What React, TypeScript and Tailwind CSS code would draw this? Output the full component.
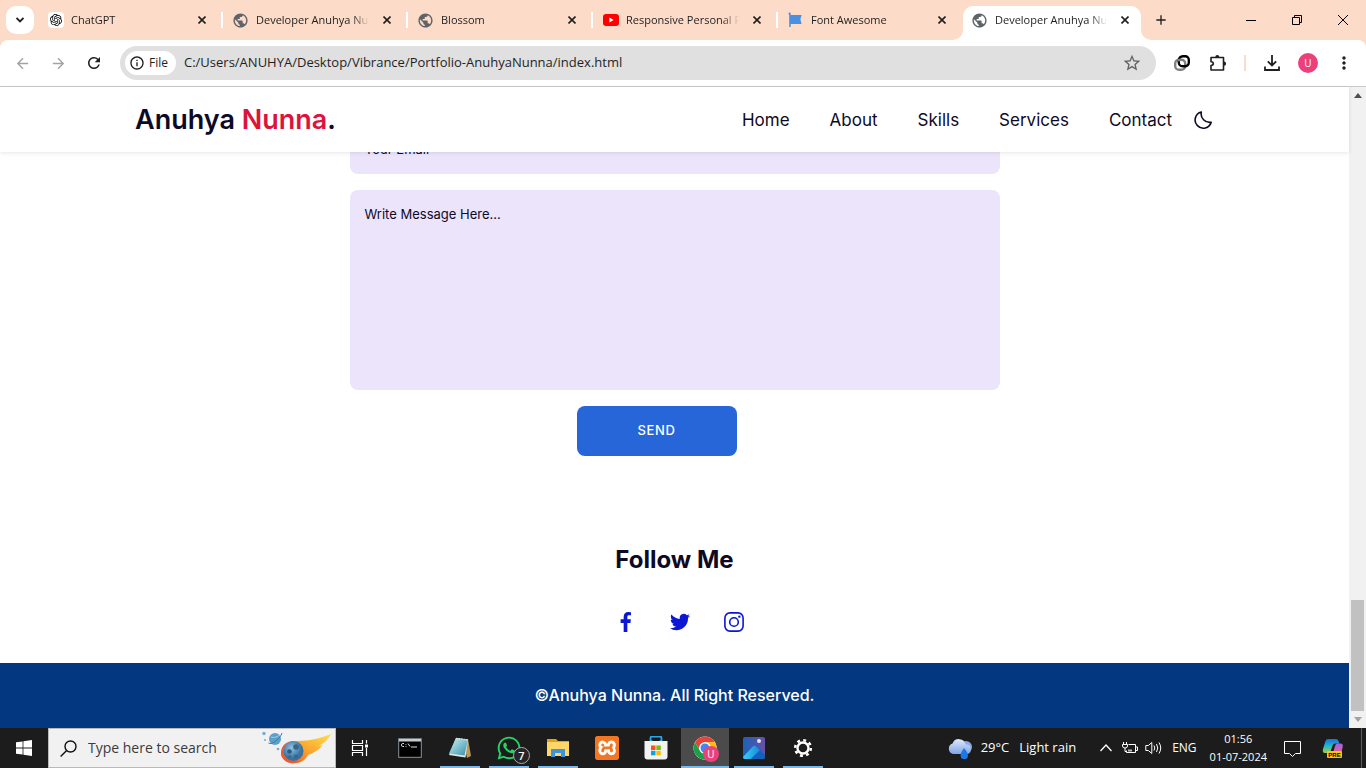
import React from "react";
import { SiOpenai, SiXampp } from "react-icons/si";
import { FaWhatsapp } from "react-icons/fa";
import {
  MdPublic,
  MdRefresh,
  MdStarBorder,
  MdArrowBack,
  MdArrowForward,
  MdInfoOutline,
  MdMoreVert,
  MdAdd,
} from "react-icons/md";

const SYSTEM_FONT = "font-['Open_Sans','Noto_Sans',sans-serif]";
const SITE_FONT = "font-['Inter','Open_Sans',sans-serif]";

/* ---------- Browser ---------- */

const Globe = () => <MdPublic className="size-[17px] text-[#5f6368]" />;

const ChatIcon = () => (
  <span className="flex size-4 items-center justify-center rounded-sm bg-white">
    <SiOpenai className="size-3 text-black" />
  </span>
);

const YouTubeIcon = () => (
  <svg viewBox="0 0 16 16" className="size-4">
    <rect y="2" width="16" height="12" rx="3" fill="#f00" />
    <path d="M6.4 5.6v4.8L10.6 8z" fill="#fff" />
  </svg>
);

const FlagIcon = () => (
  <svg viewBox="0 0 16 16" className="size-4" fill="#4a90e2">
    <path d="M.5 1.500a1 1 0 0 1 2.200 0V15H1.200V3A1.600 1.600 0 0 1 .5 1.500z" />
    <path d="M2 3h11.600l-1.200 4.200 1.200 4.800H2z" />
  </svg>
);

const tabs = [
  { title: "ChatGPT", icon: <ChatIcon /> },
  { title: "Developer Anuhya Nunna", icon: <Globe /> },
  { title: "Blossom", icon: <Globe /> },
  { title: "Responsive Personal Portfolio", icon: <YouTubeIcon /> },
  { title: "Font Awesome", icon: <FlagIcon /> },
  { title: "Developer Anuhya Nunna", icon: <Globe />, active: true },
];

function TabStrip() {
  return (
    <div className="flex h-10 shrink-0 bg-[#fcdbc9]">
      <button aria-label="Search tabs" className="ml-1.5 mt-1.5 flex size-7 shrink-0 items-center justify-center rounded-[10px] bg-white">
        <svg viewBox="0 0 8 8" className="size-2" fill="none" stroke="#1f1f1f" strokeWidth="1.800"><path d="M.5 2L4 5.500 7.500 2" /></svg>
      </button>
      <div role="tablist" className="ml-1 flex min-w-0 flex-1">
        {tabs.map((tab, i) => (
          <div key={i} className="relative flex min-w-0 max-w-[185px] flex-1 items-end pr-[7px]">
            <div
              role="tab"
              aria-selected={!!tab.active}
              className={
                tab.active
                  ? "flex h-[34px] w-full items-center rounded-t-[10px] bg-white pb-1.5 pl-2 pr-2"
                  : "flex h-[34px] w-full items-center pb-1.5 pl-[9px] pr-1.5"
              }
            >
              <span className="flex w-[17px] shrink-0 justify-center">{tab.icon}</span>
              <span className="ml-[7px] min-w-0 flex-1 overflow-hidden whitespace-nowrap text-[11px] leading-4 text-[#1f1f1f] [mask-image:linear-gradient(to_right,black_85%,transparent)]">
                {tab.title}
              </span>
              <button aria-label={`Close ${tab.title}`} className="ml-2.5 flex size-4 shrink-0 items-center justify-center text-[#1f1f1f]">
                <svg viewBox="0 0 8 8" className="size-2" stroke="currentColor" strokeWidth="1.600"><path d="M.5 .5l7 7M7.500 .5l-7 7" /></svg>
              </button>
            </div>
            {i < 4 && <span className="absolute right-0 top-3 h-4 w-0.5 bg-white" />}
            {tab.active && (
              <>
                <svg viewBox="0 0 10 10" className="absolute -left-2.5 bottom-0 size-2.5" fill="#fff">
                  <path d="M10 0v10H0A10 10 0 0 0 10 0z" />
                </svg>
                <svg viewBox="0 0 10 10" className="absolute -right-[3px] bottom-0 size-2.5" fill="#fff">
                  <path d="M0 0v10h10A10 10 0 0 1 0 0z" />
                </svg>
              </>
            )}
          </div>
        ))}
        <button aria-label="New tab" className="ml-[3px] mt-2.5 flex size-5 items-center justify-center text-[#1f1f1f]">
          <MdAdd className="size-4" />
        </button>
      </div>
      <div className="flex h-10 shrink-0 items-center text-black">
        <button aria-label="Minimize" className="flex w-[46px] justify-center">
          <svg viewBox="0 0 10 10" className="size-2.5" stroke="currentColor"><path d="M0 5.500h10" /></svg>
        </button>
        <button aria-label="Restore" className="flex w-[46px] justify-center">
          <svg viewBox="0 0 10 10" className="size-2.5" stroke="currentColor" fill="none"><path d="M.5 2.500h7v7h-7zM2.500 2.500v-2h7v7h-2" /></svg>
        </button>
        <button aria-label="Close window" className="flex w-[46px] justify-center">
          <svg viewBox="0 0 10 10" className="size-2.5" stroke="currentColor"><path d="M0 0l10 10M10 0L0 10" /></svg>
        </button>
      </div>
    </div>
  );
}

function AddressBar() {
  return (
    <div className="shrink-0 bg-[#fcdbc9]">
      <div className="flex h-[47px] items-center rounded-t-lg border-b border-[#cacaca] bg-white pl-3.5 pr-3 text-[#1f1f1f]">
        <button aria-label="Back" className="text-[#a3a3a3]"><MdArrowBack className="size-[17px]" /></button>
        <button aria-label="Forward" className="ml-[19px] text-[#a3a3a3]"><MdArrowForward className="size-[17px]" /></button>
        <button aria-label="Reload" className="ml-[18px]"><MdRefresh className="size-[18px]" /></button>
        <div className="ml-[17px] flex h-[34px] flex-1 items-center rounded-full bg-[#e0e0e0] pl-[5px] pr-3.5">
          <button className="flex h-6 items-center gap-1 rounded-full bg-white pl-1 pr-2 text-xs">
            <MdInfoOutline className="size-4" />
            File
          </button>
          <input
            aria-label="Address"
            defaultValue="C:/Users/ANUHYA/Desktop/Vibrance/Portfolio-AnuhyaNunna/index.html"
            className="ml-2 min-w-0 flex-1 bg-transparent text-[13px] outline-none"
          />
          <button aria-label="Bookmark this page"><MdStarBorder className="size-5 text-[#5f6368]" /></button>
        </div>
        <button aria-label="Linked rings extension" className="ml-[18px]">
          <svg viewBox="0 0 16 16" className="size-4" fill="none" strokeWidth="2.400">
            <rect x="1.200" y="4.700" width="10" height="10" rx="3.800" stroke="#808080" />
            <path d="M4.800 7V5.200a4 4 0 0 1 4-4h2.500a3.500 3.500 0 0 1 3.500 3.500v3a3.500 3.500 0 0 1-3.500 3.500H8.600a3.800 3.800 0 0 1-3.800-3.800z" stroke="#000" />
            <path d="M3.600 5.500Q4.500 4.700 7 4.700" stroke="#808080" />
          </svg>
        </button>
        <button aria-label="Extensions" className="ml-[19px]">
          <svg viewBox="0 0 18 18" className="size-[18px]" fill="currentColor">
            <path d="M2 3.500h12.500v12.500H2v-4.500q2.300 0 2.300-1.900T2 7.700z" fill="none" stroke="currentColor" strokeWidth="1.600" strokeLinejoin="round" />
            <path d="M6.300 3a2 2 0 0 1 4 0zM15 7.600a2.100 2.100 0 0 1 0 4.200z" />
          </svg>
        </button>
        <span className="ml-[17px] h-4 w-0.5 bg-[#fcdbc9]" />
        <button aria-label="Downloads" className="ml-[18px]">
          <svg viewBox="0 0 16 16" className="size-4" fill="none" stroke="currentColor" strokeWidth="1.800">
            <path d="M8 0v10M3.800 6.300L8 10.500l4.200-4.200M1 11.500V15h14v-3.500" />
          </svg>
        </button>
        <button aria-label="Profile" className="ml-[18px] flex size-5 items-center justify-center rounded-full bg-[#ec407a] text-[10px] text-white">U</button>
        <button aria-label="Menu" className="ml-4"><MdMoreVert className="size-5" /></button>
      </div>
    </div>
  );
}

function Scrollbar() {
  return (
    <div className="flex w-[17px] shrink-0 flex-col items-center bg-[#f1f1f1] py-[6px]">
      <svg viewBox="0 0 8 5" className="h-[5px] w-2" fill="#505050"><path d="M4 0l4 5H0z" /></svg>
      <div className="flex-1" />
      <div className="mb-[6px] h-[111px] w-[13px] bg-[#c1c1c1]" />
      <svg viewBox="0 0 8 5" className="h-[5px] w-2" fill="#a3a3a3"><path d="M4 5L0 0h8z" /></svg>
    </div>
  );
}

/* ---------- Portfolio page ---------- */

const links = ["Home", "About", "Skills", "Services", "Contact"];

function SiteHeader() {
  return (
    <header className="relative z-10 flex h-[65px] shrink-0 items-center justify-between bg-white pl-[135px] pr-[137px] text-[#0e0a26] shadow-[0_1px_4px_rgba(0,0,0,0.1)]">
      <a href="#home" className="text-[27px] font-semibold leading-9">
        Anuhya <span className="text-[#dc143c]">Nunna</span>.
      </a>
      <div className="flex items-center">
        <nav className="flex gap-10 text-[17px] leading-6">
          {links.map((l) => (
            <a key={l} href={`#${l.toLowerCase()}`}>{l}</a>
          ))}
        </nav>
        <button aria-label="Dark mode" className="ml-[22px]">
          <svg viewBox="0 0 18 18" className="size-[18px]" fill="none" stroke="currentColor" strokeWidth="1.600" strokeLinejoin="round">
            <path d="M7.300 1A8.200 8.200 0 1 0 17.200 11.200A8.600 8.600 0 0 1 7.300 1z" />
          </svg>
        </button>
      </div>
    </header>
  );
}

const field =
  "w-full shrink-0 rounded-lg bg-[#ece4fb] px-[15px] text-[13px] text-[#0e0a26] outline-none placeholder:text-[#0e0a26]";

function SitePage() {
  return (
    <div className={`${SITE_FONT} flex min-w-0 flex-1 flex-col bg-white`}>
      <SiteHeader />
      <main className="flex min-h-0 flex-1 flex-col justify-end overflow-hidden">
        <form className="mx-auto flex w-full max-w-[650px] shrink-0 flex-col gap-4" onSubmit={(e) => e.preventDefault()}>
          <input type="email" aria-label="Your Email" placeholder="Your Email" className={`${field} h-[50px]`} />
          <textarea aria-label="Message" placeholder="Write Message Here..." className={`${field} h-[200px] resize-none py-[15px]`} />
          <button className="mr-9 h-[50px] w-40 self-center rounded-lg bg-[#2666d8] text-[13px] font-medium tracking-wider text-white">SEND</button>
        </form>
        <h2 className="mt-[86px] shrink-0 text-center text-2xl font-bold leading-9 text-[#0e0a26]">Follow Me</h2>
        <div className="mt-8 mb-[29px] flex shrink-0 justify-center gap-[30px] pl-2.5 text-[#0b17d5]">
          <a href="#facebook" aria-label="Facebook">
            <svg viewBox="0 0 24 24" className="size-6" fill="currentColor">
              <path d="M15.120,5.320H17V2.140A26.110,26.110,0,0,0,14.260,2C11.540,2,9.680,3.660,9.680,6.700V9.320H6.610v3.560H9.680V22h3.680V12.880h3.060l.46-3.560H13.360V7.050C13.360,6,13.640,5.320,15.120,5.320Z" />
            </svg>
          </a>
          <a href="#twitter" aria-label="Twitter">
            <svg viewBox="0 0 24 24" className="size-6" fill="currentColor">
              <path d="M22,5.800a8.490,8.490,0,0,1-2.360.64,4.130,4.130,0,0,0,1.810-2.270,8.210,8.210,0,0,1-2.610,1,4.100,4.100,0,0,0-7,3.740A11.640,11.640,0,0,1,3.390,4.620a4.160,4.160,0,0,0-.55,2.070A4.090,4.090,0,0,0,4.660,10.100,4.050,4.050,0,0,1,2.800,9.590v.05a4.100,4.100,0,0,0,3.300,4A3.930,3.930,0,0,1,5,13.810a4.900,4.900,0,0,1-.77-.07,4.110,4.110,0,0,0,3.830,2.840A8.220,8.220,0,0,1,3,18.340a7.930,7.930,0,0,1-1-.06,11.570,11.570,0,0,0,6.290,1.850A11.590,11.590,0,0,0,20,8.450c0-.17,0-.35,0-.53A8.430,8.430,0,0,0,22,5.800Z" />
            </svg>
          </a>
          <a href="#instagram" aria-label="Instagram">
            <svg viewBox="0 0 24 24" className="size-6" fill="none" stroke="currentColor" strokeWidth="1.600">
              <rect x="2.900" y="2.900" width="18.200" height="18.200" rx="5" />
              <circle cx="12" cy="12" r="4.300" />
              <circle cx="17.340" cy="6.660" r="1.200" fill="currentColor" stroke="none" />
            </svg>
          </a>
        </div>
      </main>
      <footer className="flex h-[65px] shrink-0 items-center justify-center bg-[#033880] pb-0.5 text-base font-medium text-white">
        <p>©Anuhya Nunna. All Right Reserved.</p>
      </footer>
    </div>
  );
}

/* ---------- Taskbar ---------- */

const WindowsLogo = () => (
  <svg viewBox="0 0 16 16" className="size-4" fill="#fff">
    <path d="M0 2.300l6.600-.9v6.200H0zM7.400 1.300L16 0v7.600H7.400zM0 8.400h6.600v6.200L0 13.700zM7.400 8.400H16V16l-8.600-1.300z" />
  </svg>
);

const Comet = () => (
  <svg viewBox="0 0 72 34" className="h-[34px] w-[72px] shrink-0">
    <defs>
      <linearGradient id="tail" x1="0" x2="1" y1="1" y2="0">
        <stop offset="0" stopColor="#e8502c" /><stop offset=".5" stopColor="#fba62f" /><stop offset="1" stopColor="#fde04a" />
      </linearGradient>
      <radialGradient id="rock" cx=".4" cy=".35"><stop offset="0" stopColor="#8cc4e4" /><stop offset="1" stopColor="#38729f" /></radialGradient>
    </defs>
    <path d="M20 22c1-8 9-12 17-12 12 0 23-3 33-7-2 5-7 9-12 12l4-1c-5 6-10 8-15 10-3 6-9 9-16 8-7-2-11-5-11-10z" fill="url(#tail)" />
    <path d="M20 22c0-8 6-12 13-12-6 4-8 10-4 18 3 2 6 2 9 1-3 3-6 4-9 3-5-1-9-5-9-10z" fill="#ea5a35" />
    <circle cx="32.500" cy="20" r="10" fill="url(#rock)" />
    <circle cx="35" cy="16" r="2.800" fill="#37668c" /><circle cx="28.500" cy="20.500" r="2.300" fill="#2f5b80" /><circle cx="35" cy="25.500" r="2" fill="#37668c" /><circle cx="28.500" cy="25.500" r="1.300" fill="#37668c" />
    <circle cx="14" cy="8" r="6" fill="#5c9fcb" />
    <path d="M7.500 12c3 2.500 12-4.500 13.500-10" stroke="#3c7ca9" fill="none" />
    <path d="M10 6c3 1 6 0 9-2" stroke="#9bd0ea" fill="none" />
    <circle cx="3" cy="2.500" r="1.700" fill="#72acd0" /><circle cx="4" cy="9" r="1" fill="#72acd0" /><circle cx="17" cy="18" r="1.300" fill="#72acd0" />
  </svg>
);

const TaskView = () => (
  <svg viewBox="0 0 18 16" className="mr-1 h-4 w-[18px]" fill="none" stroke="#fff" strokeWidth="1.200">
    <path d="M1.500 0v3.500h10V0M1.500 16v-3.500h10V16M1.500 5.500h10v5h-10zM15.500 0v3.500M15.500 8v8" />
    <path d="M14 4.500h3v3h-3z" fill="#fff" stroke="none" />
  </svg>
);

const Terminal = () => (
  <svg viewBox="0 0 24 20" className="mr-0.5 h-5 w-6">
    <rect x=".7" y=".7" width="22.600" height="18.600" fill="#000" stroke="#8b939b" />
    <path d="M1 1h22v2.500H1z" fill="#c5cdd3" />
    <path d="M6 5.500H4.500Q3.500 5.500 3.500 7t1 1.500H6M8 6v.8M8 8v.8M10 5.500l2 3M13 9h6" stroke="#ddd" fill="none" />
  </svg>
);

const Notepad = () => (
  <svg viewBox="0 0 24 24" className="size-6">
    <defs><linearGradient id="note" x1="0" x2="1" y1="0" y2="1"><stop stopColor="#d7eef2" /><stop offset=".5" stopColor="#7fc3d2" /><stop offset="1" stopColor="#3a8ba6" /></linearGradient></defs>
    <path d="M20 3l3 17-4 2-4-18z" fill="#b7995f" />
    <path d="M8 2l12 1.500-2.500 18L1 19z" fill="#e8e8e0" />
    <path d="M8 2l12 1.500-3.500 16L1 17.500z" fill="url(#note)" />
    <path d="M8 2.500l12 1.500" stroke="#d8dde0" strokeWidth="1.500" strokeDasharray="1.500 1" />
  </svg>
);

const WhatsApp = () => (
  <span className="relative">
    <FaWhatsapp className="size-[26px] text-[#25d366]" />
    <span className="absolute -right-2 -bottom-[3px] flex size-[17px] items-center justify-center rounded-full border border-[#aaa] bg-[#252525] text-[11px] font-semibold leading-none text-white">7</span>
  </span>
);

const Folder = () => (
  <svg viewBox="0 0 22 20" className="h-5 w-[22px]">
    <path d="M0 1h9l2 2h11v5H0z" fill="#e5a210" />
    <path d="M0 4h22v14H0z" fill="#fcd667" />
    <path d="M4 11h14v8h-4v-4H8v4H4z" fill="#3f92dc" />
  </svg>
);

const Xampp = () => (
  <span className="flex size-6 items-center justify-center overflow-hidden rounded-[3px] bg-[#f37623]">
    <span className="flex size-5 items-center justify-center bg-white"><SiXampp className="size-6 shrink-0 text-[#f37623]" /></span>
  </span>
);

const Store = () => (
  <svg viewBox="0 0 24 24" className="size-6">
    <path d="M6.500 6V2q0-1.500 1.500-1.500h8q1.500 0 1.500 1.500v4" stroke="#28a8ea" strokeWidth="1.800" fill="none" />
    <path d="M.5 5h23v15.500q0 3-3 3h-17q-3 0-3-3z" fill="#f2f2f2" />
    <path d="M6.500 5v-1h1.800v1zM15.700 5v-1h1.800v1z" fill="#28a8ea" />
    <path d="M7 9.500h4.500V14H7z" fill="#f35325" /><path d="M12.300 9.500h4.500V14h-4.500z" fill="#81bc06" />
    <path d="M7 14.800h4.500v4.500H7z" fill="#05a6f0" /><path d="M12.300 14.800h4.500v4.500h-4.500z" fill="#ffba08" />
  </svg>
);

const Chrome = () => (
  <span className="relative">
    <svg viewBox="0 0 48 48" className="size-6">
      <circle cx="24" cy="24" r="23" fill="#fff" />
      <path d="M4.100 12.500a23 23 0 0 1 39.800 0H24a11.500 11.500 0 0 0-10 17.200z" fill="#ea4335" />
      <path d="M43.900 12.500A23 23 0 0 1 24 47l10-17.300a11.500 11.500 0 0 0-10-17.200z" fill="#fbbc04" />
      <path d="M24 47A23 23 0 0 1 4.100 12.500L14 29.700a11.500 11.500 0 0 0 20 0z" fill="#1e9e4a" />
      <circle cx="24" cy="24" r="11.500" fill="#fff" /><circle cx="24" cy="24" r="9" fill="#4285f4" />
    </svg>
    <span className="absolute -right-0.5 -bottom-0.5 flex size-4 items-center justify-center rounded-full bg-[#ec407a] text-[10px] leading-none text-white">U</span>
  </span>
);

const Photos = () => (
  <svg viewBox="0 0 22 22" className="size-[22px]">
    <defs>
      <linearGradient id="sky" x1="0" x2="1"><stop stopColor="#1d62b5" /><stop offset="1" stopColor="#6750a9" /></linearGradient>
      <linearGradient id="hill" x1="0" x2="1"><stop stopColor="#3bd0f5" /><stop offset="1" stopColor="#1687df" /></linearGradient>
    </defs>
    <rect width="22" height="22" rx="2" fill="url(#sky)" />
    <path d="M5 22L0 19 9.800 9.500q1.700-1.700 3.400 0L22 18v2q0 2-2 2z" fill="#0f62bd" />
    <path d="M0 20L9.800 9.500q1.700-1.700 3.400 0l3.800 3.700L7.500 22H2q-2 0-2-2z" fill="url(#hill)" />
    <circle cx="16" cy="4" r="2" fill="#e5e6f6" />
  </svg>
);

const Gear = () => (
  <svg viewBox="0 0 20 20" className="size-5" fill="none" stroke="#fff">
    <circle cx="10" cy="10" r="5.500" strokeWidth="2.400" />
    <circle cx="10" cy="10" r="7.800" strokeWidth="2.600" strokeDasharray="2.900 3.226" />
  </svg>
);

const apps = [
  { name: "Task View", icon: <TaskView /> },
  { name: "Command Prompt", icon: <Terminal /> },
  { name: "Notepad", icon: <Notepad />, open: true },
  { name: "WhatsApp", icon: <WhatsApp />, open: true },
  { name: "File Explorer", icon: <Folder />, open: true },
  { name: "XAMPP", icon: <Xampp /> },
  { name: "Microsoft Store", icon: <Store /> },
  { name: "Chrome", icon: <Chrome />, active: true },
  { name: "Photos", icon: <Photos />, open: true },
  { name: "Settings", icon: <Gear />, open: true },
];

const RainCloud = () => (
  <svg viewBox="0 0 26 22" className="h-[22px] w-[26px]">
    <defs><linearGradient id="cloud" x1="0" x2="0" y1="0" y2="1"><stop stopColor="#dfe9fa" /><stop offset="1" stopColor="#7fa4e8" /></linearGradient></defs>
    <circle cx="19" cy="10" r="6" fill="#8aa9e6" />
    <path d="M6 17a5.500 5.500 0 0 1-.5-10.500 7 7 0 0 1 13.300 1A4.800 4.800 0 0 1 20 17z" fill="url(#cloud)" />
    <path d="M17 11q4 4.500 4 7.500a3.700 3.700 0 0 1-7.400 0Q13.600 15.500 17 11z" fill="#1a78e8" />
  </svg>
);

const Copilot = () => (
  <svg viewBox="0 0 22 20" className="h-5 w-[22px]">
    <defs>
      <linearGradient id="copA" x1="0" x2="0" y1="0" y2="1"><stop stopColor="#1b6ee0" /><stop offset=".5" stopColor="#22b8c8" /><stop offset="1" stopColor="#a8cf3c" /></linearGradient>
      <linearGradient id="copB" x1="0" x2="0" y1="0" y2="1"><stop stopColor="#9a63e8" /><stop offset="1" stopColor="#f0608c" /></linearGradient>
    </defs>
    <path d="M6 1h8q2 0 2.500 2l.8 2.500h-4q-2 0-2.700 2L8 15H3q-3 0-2-4l2.500-8Q4.200 1 6 1z" fill="url(#copA)" />
    <path d="M15 5.500h3.500q3 0 2.200 3.500l-1.500 6H11l2-7q.6-2.500 2-2.500z" fill="url(#copB)" />
    <rect x="5" y="13" width="15" height="7" rx="1" fill="#ffc20e" />
    <text x="12.500" y="18.700" textAnchor="middle" fontSize="6" fontWeight="700" fontFamily="Liberation Sans, sans-serif">PRE</text>
  </svg>
);

function Taskbar() {
  return (
    <div className="flex h-10 shrink-0 items-center bg-[#1c1c1c] text-white">
      <button aria-label="Start" className="flex h-10 w-12 shrink-0 items-center justify-center"><WindowsLogo /></button>
      <div className="flex h-10 w-72 shrink-0 items-center border border-[#b9b9b9] bg-[#f1f1f1] pl-[11px] pr-0.5">
        <svg viewBox="0 0 17 17" className="size-[17px] shrink-0" fill="none" stroke="#111" strokeWidth="1.400">
          <circle cx="10.500" cy="6.500" r="5.500" /><path d="M6.600 10.400L.6 16.400" />
        </svg>
        <input aria-label="Search" placeholder="Type here to search" className="ml-[11px] w-full min-w-0 bg-transparent text-sm outline-none placeholder:text-[#3b3b3b]" />
        <Comet />
      </div>
      <div className="ml-0.5 flex gap-px">
        {apps.map((a) => (
          <button
            key={a.name}
            aria-label={a.name}
            className={a.active ? "relative flex h-10 w-12 items-center justify-center bg-[#4b4b4b]" : "relative flex h-10 w-12 items-center justify-center"}
          >
            {a.icon}
            {a.open && <span className="absolute inset-x-1 bottom-0 h-0.5 bg-[#76b9ed]" />}
            {a.active && <span className="absolute inset-x-0 bottom-0 h-0.5 bg-[#76b9ed]" />}
          </button>
        ))}
      </div>
      <div className="ml-auto flex items-center">
        <button className="flex items-center text-[13px]">
          <RainCloud />
          <span className="ml-2">29°C</span>
          <span className="ml-2.5">Light rain</span>
        </button>
        <button aria-label="Show hidden icons" className="ml-6">
          <svg viewBox="0 0 12 8" className="h-2 w-3" fill="none" stroke="#fff" strokeWidth="1.300"><path d="M.5 7L6 1l5.500 6" /></svg>
        </button>
        <svg viewBox="0 0 16 12" className="ml-2.5 h-3 w-4" fill="none" stroke="#fff">
          <path d="M6.500 2.500h7v8h-9v-2M13.500 5h2v3.500h-2M1.500 0v2.500M4.500 0v2.500M.5 2.500h5V4Q5.500 6 3 6T.5 4zM3 6v3.500h1.500" />
          <path d="M6 8.500h4" strokeWidth="2" opacity=".7" />
        </svg>
        <svg viewBox="0 0 18 14" className="ml-[7px] h-3.5 w-[18px]" fill="none" stroke="#fff">
          <path d="M.8 4.500h2.500l3.500-3v11l-3.500-3H.8zM9 4.500q1.500 2.500 0 5M11.500 3q2.500 4 0 8M14 1.500q3.500 5.500 0 11" />
        </svg>
        <span className="ml-[9px] text-xs">ENG</span>
        <time className="ml-[13px] flex flex-col items-center text-[11px] leading-[18px]">
          <span>01:56</span>
          <span>01-07-2024</span>
        </time>
        <button aria-label="Notifications" className="ml-[17px]">
          <svg viewBox="0 0 17 17" className="size-[17px]" fill="none" stroke="#fff"><path d="M.5 1.500h16v12h-5L8.500 16.500l-3-3h-5z" /></svg>
        </button>
        <button aria-label="Copilot" className="ml-[21px]"><Copilot /></button>
        <span className="ml-[17px] mr-1 h-10 w-px bg-[#5c5c5c]" />
      </div>
    </div>
  );
}

export default function App() {
  return (
    <div className={`${SYSTEM_FONT} flex h-screen flex-col overflow-hidden bg-white`}>
      <TabStrip />
      <AddressBar />
      <div className="flex min-h-0 flex-1">
        <SitePage />
        <Scrollbar />
      </div>
      <Taskbar />
    </div>
  );
}
